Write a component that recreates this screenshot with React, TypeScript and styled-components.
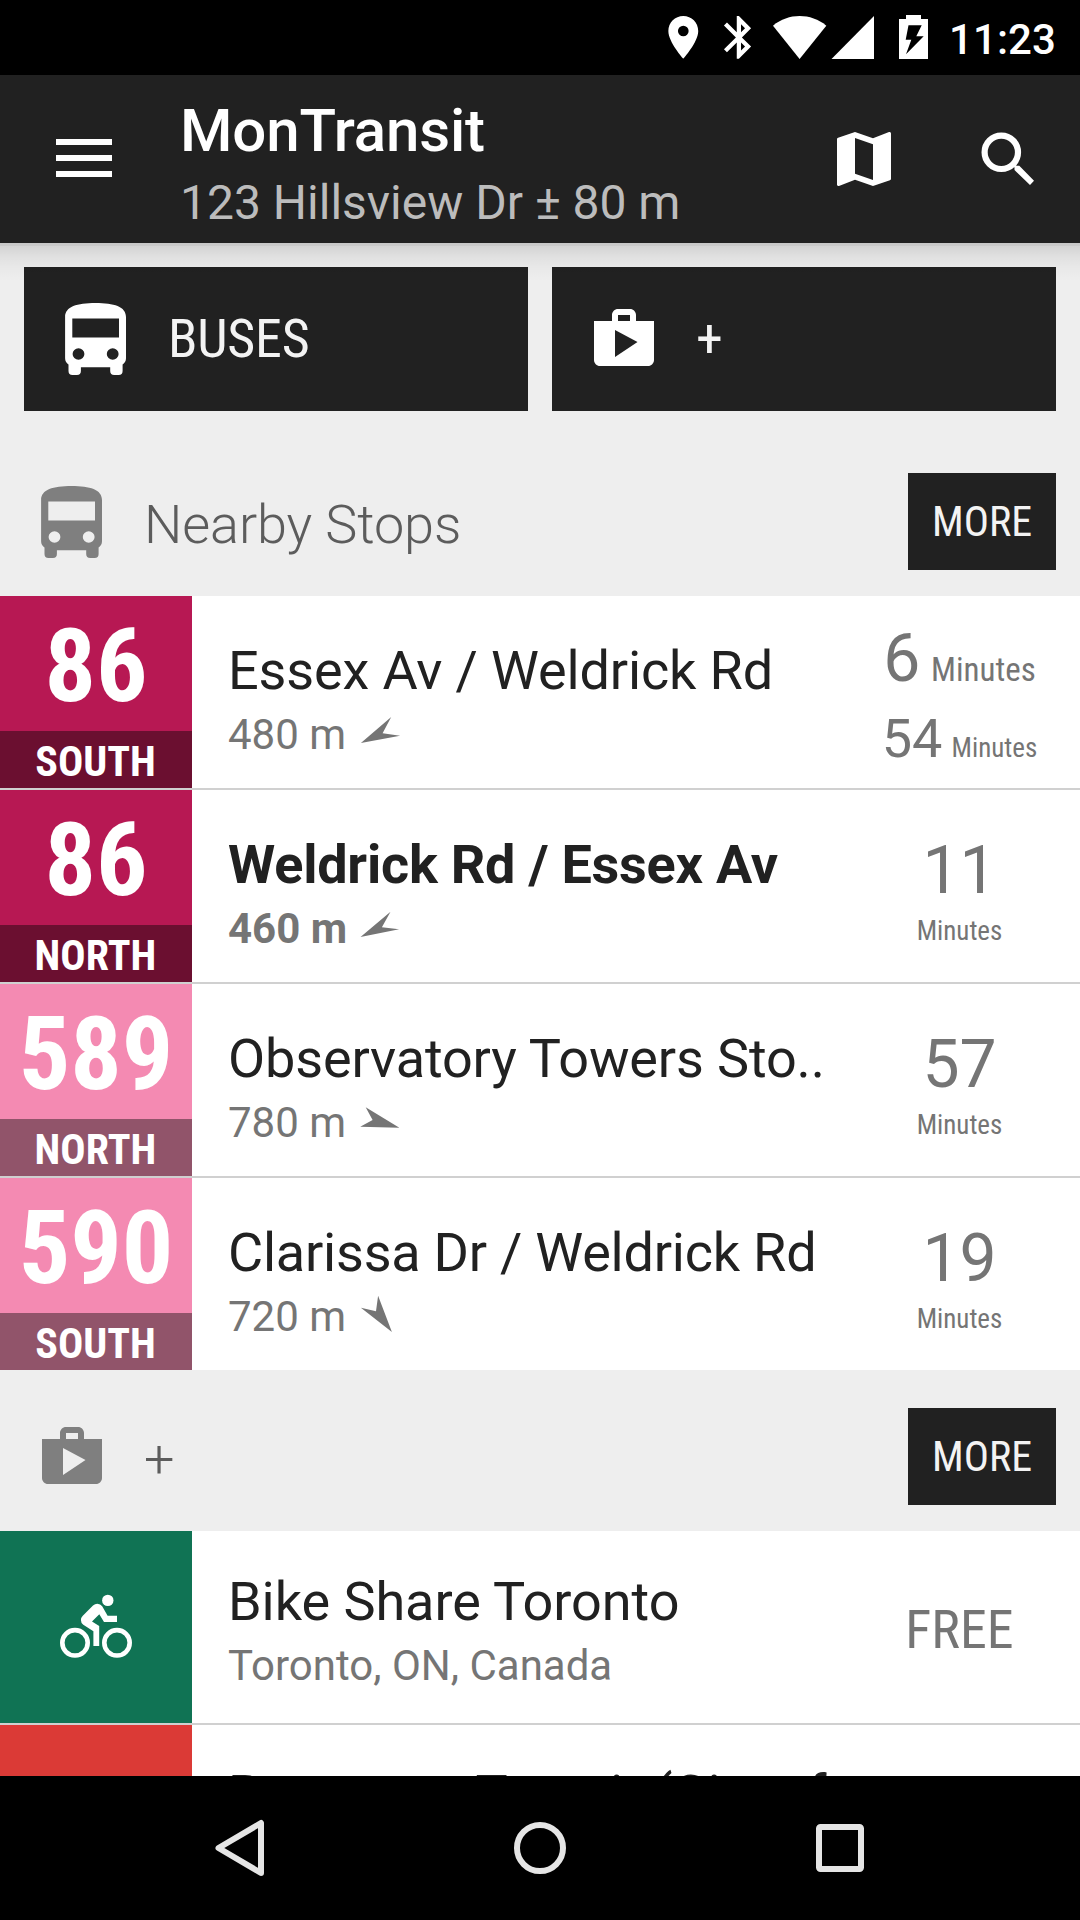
import React from "react";
import styled, { createGlobalStyle } from "styled-components";

const GlobalStyle = createGlobalStyle`
  *, *::before, *::after { box-sizing: border-box; }
  html, body { margin: 0; padding: 0; background: #000; }
  body { font-family: Roboto, "Noto Sans", sans-serif; overflow: hidden; }
  button { border: 0; padding: 0; margin: 0; background: none; font: inherit; }
  svg { display: block; flex: none; }
`;

const condensed = `
  font-family: "Roboto Condensed", Roboto, sans-serif;
  font-stretch: 75%;
`;

const Screen = styled.div`
  width: 1080px;
  height: 1920px;
  display: flex;
  flex-direction: column;
  overflow: hidden;
  background: #eee;
`;

const StatusBar = styled.div`
  height: 75px;
  flex: none;
  display: flex;
  justify-content: flex-end;
  align-items: flex-start;
  padding-right: 24px;
  background: #000;
  color: #fff;
`;

const Clock = styled.span`
  width: 128px;
  text-align: right;
  font-size: 42px;
  font-weight: 500;
  line-height: 49px;
  letter-spacing: 0.1px;
  padding-top: 15px;
`;

const Toolbar = styled.header`
  position: relative;
  z-index: 1;
  height: 168px;
  flex: none;
  display: flex;
  align-items: center;
  padding: 0 36px 0 56px;
  background: #212121;
  color: #fff;

  &::after {
    content: "";
    position: absolute;
    left: 0;
    right: 0;
    top: 100%;
    height: 38px;
    pointer-events: none;
    background:
      linear-gradient(rgba(0, 0, 0, 0.045), rgba(0, 0, 0, 0.045)) 0 0 / 100% 3px no-repeat,
      linear-gradient(rgba(0, 0, 0, 0.125), rgba(0, 0, 0, 0.055) 38%, rgba(0, 0, 0, 0.025) 65%, transparent);
  }
`;

const MenuButton = styled.button`
  width: 56px;
  display: flex;
  flex-direction: column;
  gap: 10px;
  margin-top: -2px;
`;

const MenuLine = styled.span`
  height: 6px;
  background: #fff;
`;

const TitleBlock = styled.div`
  flex: 1;
  align-self: flex-start;
  padding: 20px 0 0 68px;
`;

const Title = styled.h1`
  margin: 0;
  font-size: 60px;
  font-weight: 500;
  line-height: 71px;
  letter-spacing: -0.15px;
`;

const Subtitle = styled.div`
  margin-top: 8px;
  font-size: 48px;
  line-height: 57px;
  color: #bcbcbc;
`;

const Actions = styled.div`
  display: flex;
  gap: 72px;
`;

const Content = styled.main`
  flex: 1;
  min-height: 0;
  overflow: hidden;
`;

const ModeGrid = styled.div`
  display: grid;
  grid-template-columns: 1fr 1fr;
  gap: 24px;
  padding: 24px;
`;

const ModeButton = styled.button`
  height: 144px;
  display: flex;
  align-items: center;
  gap: 36px;
  padding-left: 36px;
  background: #212121;
  color: #fff;
`;

const ModeLabel = styled.span`
  ${condensed}
  padding-bottom: 1px;
  font-size: 54px;
  line-height: 63px;
  letter-spacing: -0.25px;
  color: #f3f3f3;
`;

const SectionHeader = styled.div`
  height: 161px;
  display: flex;
  align-items: center;
  padding: 38px 24px 26px 36px;
  color: #7f7f7f;
`;

const SectionTitle = styled.h2`
  flex: 1;
  margin: 0;
  padding: 6px 0 0 36px;
  font-size: 54px;
  font-weight: 300;
  line-height: 63px;
  letter-spacing: -0.1px;
  color: #5c5c5c;
`;

const MoreButton = styled.button`
  ${condensed}
  width: 148px;
  height: 97px;
  background: #212121;
  color: #f3f3f3;
  font-size: 42px;
  text-align: center;
`;

const List = styled.div`
  background: #fff;
`;

const Row = styled.div`
  height: 192px;
  display: flex;

  & + & {
    height: 194px;
    border-top: 2px solid #d0d0d0;
  }
`;

const Badge = styled.div<{ $color: string }>`
  width: 192px;
  height: 192px;
  flex: none;
  display: flex;
  flex-direction: column;
  align-items: center;
  justify-content: center;
  background: ${(p) => p.$color};
  color: #fff;
`;

const RouteNumber = styled.div`
  ${condensed}
  height: 135px;
  padding-top: 3px;
  font-size: 102px;
  font-weight: 700;
  line-height: 135px;
`;

const Direction = styled.div<{ $color: string }>`
  ${condensed}
  width: 100%;
  height: 57px;
  padding: 2px 1px 0 0;
  text-align: center;
  font-size: 42px;
  font-weight: 700;
  line-height: 57px;
  background: ${(p) => p.$color};
`;

const Details = styled.div<{ $top: number; $bold?: boolean }>`
  flex: 1;
  min-width: 0;
  padding: ${(p) => p.$top}px 0 0 36px;
  font-weight: ${(p) => (p.$bold ? 700 : 400)};
  white-space: nowrap;
`;

const Name = styled.div<{ $tracking?: number }>`
  font-size: 54px;
  line-height: 63px;
  letter-spacing: ${(p) => p.$tracking ?? -0.05}px;
  color: #212121;
`;

const Secondary = styled.div`
  display: flex;
  height: 50px;
  margin-top: 8px;
  font-size: 42px;
  line-height: 49px;
  color: #757575;
`;

const Distance = styled.span`
  width: 130px;
`;

const Status = styled.div<{ $top: number; $gap: number }>`
  width: 240px;
  flex: none;
  display: flex;
  flex-direction: column;
  align-items: center;
  gap: ${(p) => p.$gap}px;
  padding: ${(p) => p.$top}px 1px 0 0;
  color: #757575;
  white-space: pre;
`;

const TimeLine = styled.div<{ $size: number; $line: number }>`
  font-size: ${(p) => p.$size}px;
  line-height: ${(p) => p.$line}px;
  height: ${(p) => p.$line}px;
`;

const Unit = styled.span<{ $size: number; $indent?: number }>`
  ${condensed}
  margin-left: ${(p) => p.$indent ?? 0}px;
  font-size: ${(p) => p.$size}px;
  line-height: 32px;
`;

const Price = styled.div`
  ${condensed}
  font-size: 54px;
  line-height: 63px;
`;

const NavBar = styled.nav`
  height: 144px;
  flex: none;
  display: flex;
  justify-content: center;
  align-items: center;
  gap: 228px;
  background: #000;
`;

const StatusIcons = () => (
  <svg width="264" height="75" viewBox="664 0 264 75" fill="#fff">
    <path
      transform="translate(657.7 11.8) scale(2.133)"
      d="M12 2C8.13 2 5 5.13 5 9c0 5.25 7 13 7 13s7-7.75 7-13c0-3.87-3.13-7-7-7zm0 9.500a2.500 2.500 0 1 1 0-5 2.500 2.500 0 0 1 0 5z"
    />
    <path
      transform="translate(713.3 11.8) scale(2.133)"
      d="M17.710 7.710L12 2h-1v7.590L6.410 5 5 6.410 10.590 12 5 17.590 6.410 19 11 14.410V22h1l5.710-5.710-4.300-4.290 4.300-4.290zM13 5.830l1.880 1.880L13 9.590V5.830zm1.880 10.460L13 18.170v-3.760l1.880 1.880z"
    />
    <path d="M773 25.700C788.500 12.900 810.800 12.900 826.300 25.700L799.600 59Z" />
    <path d="M831.500 59L874 16V59Z" />
    <path
      fillRule="evenodd"
      d="M906 15h15v4h7v40h-29V19h7zM908.500 25.300L905.700 39.700H911.300L906 54.300L923.700 36.200H916.300L921.700 25.300Z"
    />
  </svg>
);

const MapIcon = () => (
  <svg width="72" height="72" viewBox="0 0 24 24" fill="#fff">
    <path d="M20.500 3l-.16.030L15 5.100 9 3 3.360 4.900c-.21.070-.36.250-.36.480V20.500c0 .28.220.5.500.5l.16-.030L9 18.900l6 2.100 5.640-1.900c.21-.07.360-.25.360-.48V3.500c0-.28-.22-.5-.5-.5zM15 19l-6-2.110V5l6 2.110V19z" />
  </svg>
);

const SearchIcon = () => (
  <svg width="72" height="72" viewBox="0 0 72 72" fill="none">
    <circle cx="29.300" cy="29.300" r="16.700" stroke="#fff" strokeWidth="6.200" />
    <path fill="#fff" d="M40.500 42.500L42.500 40.500L44.500 42.700H47.300L62 57.700L58 62L42.500 47V44.500Z" />
  </svg>
);

const BusIcon = () => (
  <svg width="72" height="72" viewBox="0 0 72 72" fill="currentColor">
    <path
      fillRule="evenodd"
      d="M5.100 14C5.100 3.500 17 0 35.500 0S66 3.500 66 14V55.300C66 58 64.800 60 62.600 61.500V68Q62.600 72 58.600 72H54.200Q50.200 72 50.200 68V64.300H20.900V68Q20.900 72 16.900 72H12.500Q8.500 72 8.500 68V61.500C6.300 60 5.100 58 5.100 55.300ZM12.300 15.500V34.500H59V15.500ZM12.600 51a5.900 5.700 0 1 0 11.800 0a5.900 5.700 0 1 0-11.800 0M46.800 51a5.900 5.700 0 1 0 11.800 0a5.900 5.700 0 1 0-11.800 0"
    />
  </svg>
);

const ShopIcon = () => (
  <svg width="72" height="72" viewBox="0 0 24 24" fill="currentColor">
    <path d="M16 6V4c0-1.110-.89-2-2-2h-4c-1.110 0-2 .89-2 2v2H2v13c0 1.110.89 2 2 2h16c1.110 0 2-.89 2-2V6h-6zm-6-2h4v2h-4V4zM9 18V9l7.500 4L9 18z" />
  </svg>
);

const BikeIcon = () => (
  <svg width="72" height="72" viewBox="0 0 72 72" fill="none">
    <g stroke="#fff" strokeWidth="4.600">
      <circle cx="15" cy="51.800" r="12.700" />
      <circle cx="57" cy="51.800" r="12.700" />
    </g>
    <circle cx="47.800" cy="9.400" r="5.700" fill="#fff" />
    <path
      fill="#fff"
      d="M20.900 29Q20.900 32 23.300 33.700L33.400 40.300V55H39.200V35L32 30.500L39.300 23.300L44 31H57V24.700H47.600L42.200 15.300Q40.500 12.700 37.300 12.700Q35 12.700 33 14.500L22.800 24.700Q20.900 26.600 20.900 29Z"
    />
  </svg>
);

const Arrow = styled.svg`
  margin-top: 1px;
  fill: #757575;
`;

const Bearing = ({ points }: { points: string }) => (
  <Arrow width="46" height="42" viewBox="0 0 46 42">
    <polygon points={points} />
  </Arrow>
);

type Stop = {
  route: string;
  direction: string;
  color: string;
  band: string;
  name: string;
  tracking: number;
  distance: string;
  bearing: string;
  times: string[];
  bold?: boolean;
};

const stops: Stop[] = [
  {
    route: "86",
    direction: "SOUTH",
    color: "#b71853",
    band: "#6b0f30",
    name: "Essex Av / Weldrick Rd",
    tracking: -0.13,
    distance: "480 m",
    bearing: "2.9,32 33.2,6 24.6,22.3 42.1,24.7",
    times: ["6", "54"],
  },
  {
    route: "86",
    direction: "NORTH",
    color: "#b71853",
    band: "#6b0f30",
    name: "Weldrick Rd / Essex Av",
    tracking: -0.23,
    distance: "460 m",
    bearing: "2.5,32 32.5,6.7 23.9,22.3 41.1,24.3",
    times: ["11"],
    bold: true,
  },
  {
    route: "589",
    direction: "NORTH",
    color: "#f48ab2",
    band: "#91546a",
    name: "Observatory Towers Sto..",
    tracking: -0.14,
    distance: "780 m",
    bearing: "41.4,28.7 7.7,8.3 14.6,21 2.2,27.7",
    times: ["57"],
  },
  {
    route: "590",
    direction: "SOUTH",
    color: "#f48ab2",
    band: "#91546a",
    name: "Clarissa Dr / Weldrick Rd",
    tracking: -0.22,
    distance: "720 m",
    bearing: "33.9,39 20.1,2.7 18,18.3 2.9,14.7",
    times: ["19"],
  },
];

const StopRow = ({ stop }: { stop: Stop }) => (
  <Row>
    <Badge $color={stop.color}>
      <RouteNumber>{stop.route}</RouteNumber>
      <Direction $color={stop.band}>{stop.direction}</Direction>
    </Badge>
    <Details $top={43} $bold={stop.bold}>
      <Name $tracking={stop.tracking}>{stop.name}</Name>
      <Secondary>
        <Distance>{stop.distance}</Distance>
        <Bearing points={stop.bearing} />
      </Secondary>
    </Details>
    {stop.times.length > 1 ? (
      <Status $top={24} $gap={10}>
        <TimeLine $size={66} $line={77}>
          {stop.times[0]}
          <Unit $size={33} $indent={3}> Minutes</Unit>
        </TimeLine>
        <TimeLine $size={54} $line={63}>
          {stop.times[1]}
          <Unit $size={27} $indent={3}> Minutes</Unit>
        </TimeLine>
      </Status>
    ) : (
      <Status $top={42} $gap={6}>
        <TimeLine $size={66} $line={77}>
          {stop.times[0]}
        </TimeLine>
        <Unit $size={27}>Minutes</Unit>
      </Status>
    )}
  </Row>
);

export default function App() {
  return (
    <Screen>
      <GlobalStyle />
      <StatusBar>
        <StatusIcons />
        <Clock>11:23</Clock>
      </StatusBar>
      <Toolbar>
        <MenuButton aria-label="Menu">
          <MenuLine />
          <MenuLine />
          <MenuLine />
        </MenuButton>
        <TitleBlock>
          <Title>MonTransit</Title>
          <Subtitle>123 Hillsview Dr ± 80 m</Subtitle>
        </TitleBlock>
        <Actions>
          <MapIcon />
          <SearchIcon />
        </Actions>
      </Toolbar>
      <Content>
        <ModeGrid>
          <ModeButton>
            <BusIcon />
            <ModeLabel>BUSES</ModeLabel>
          </ModeButton>
          <ModeButton>
            <ShopIcon />
            <ModeLabel>+</ModeLabel>
          </ModeButton>
        </ModeGrid>
        <SectionHeader>
          <BusIcon />
          <SectionTitle>Nearby Stops</SectionTitle>
          <MoreButton>MORE</MoreButton>
        </SectionHeader>
        <List>
          {stops.map((stop) => (
            <StopRow key={stop.name} stop={stop} />
          ))}
        </List>
        <SectionHeader>
          <ShopIcon />
          <SectionTitle>+</SectionTitle>
          <MoreButton>MORE</MoreButton>
        </SectionHeader>
        <List>
          <Row>
            <Badge $color="#107354">
              <BikeIcon />
            </Badge>
            <Details $top={39}>
              <Name>Bike Share Toronto</Name>
              <Secondary>Toronto, ON, Canada</Secondary>
            </Details>
            <Status $top={67} $gap={0}>
              <Price>FREE</Price>
            </Status>
          </Row>
          <Row>
            <Badge $color="#db3a36" />
            <Details $top={38}>
              <Name>Brampton Transit (City of..</Name>
            </Details>
          </Row>
        </List>
      </Content>
      <NavBar>
        <svg width="72" height="72" viewBox="0 0 72 72" fill="none" stroke="#e5e5e5" strokeWidth="6" strokeLinejoin="round">
          <path d="M57 11V61L14.500 36Z" />
        </svg>
        <svg width="72" height="72" viewBox="0 0 72 72" fill="none" stroke="#e5e5e5" strokeWidth="6">
          <circle cx="36" cy="36" r="23" />
        </svg>
        <svg width="72" height="72" viewBox="0 0 72 72" fill="none" stroke="#e5e5e5" strokeWidth="6">
          <rect x="15" y="15" width="42" height="42" rx="1.500" />
        </svg>
      </NavBar>
    </Screen>
  );
}
